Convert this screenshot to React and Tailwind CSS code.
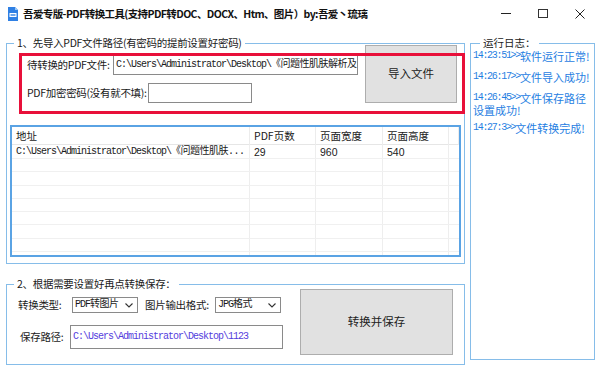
import React from "react";

const cjk = "font-['Noto_Sans_CJK_SC',sans-serif]";
const mono = "font-['Liberation_Mono','Noto_Sans_CJK_SC',monospace]";
const label = "shrink-0 whitespace-nowrap text-[10.5px] tracking-[-0.3px] leading-[14px]";

function AppIcon() {
    return (
        <svg width="16" height="16" viewBox="0 0 16 16">
            <path d="M3 1h7l3 3v11H3z" fill="#2f80e4" />
            <path d="M10 1v3h3z" fill="#9cc8f5" />
            <rect x="4.5" y="7" width="7" height="4" fill="#fff" />
            <rect x="5.5" y="8.3" width="5" height="1.4" fill="#2f80e4" />
        </svg>
    );
}

function Chevron() {
    return (
        <svg width="8" height="5" viewBox="0 0 8 5" className="ml-auto mr-[4px] shrink-0">
            <path d="M0.5 0.5L4 4L7.5 0.5" fill="none" stroke="#333" strokeWidth="1.1" />
        </svg>
    );
}

function Path({ text, tail }) {
    return (
        <span className={`${mono} text-[10px] leading-[12px] tracking-[-1px] whitespace-nowrap`}>
            {text}
            {tail && <span className="tracking-[-0.5px]">{tail}</span>}
        </span>
    );
}

function LogLine({ text, mb }) {
    const [time, msg] = text;
    return (
        <div className={`h-[12px] flex items-center whitespace-nowrap text-[#1f80e2] ${mb}`}>
            {time && <span className={`${mono} text-[10px] leading-[12px] tracking-[-1.3px]`}>{time}&gt;&gt;</span>}
            <span className={`${cjk} text-[11px] leading-[12px]`}>{msg}</span>
        </div>
    );
}

const rows = [
    ["C:\\Users\\Administrator\\Desktop\\", "《问题性肌肤...", "29", "960", "540"],
    ...Array.from({ length: 8 }, () => ["", "", "", "", ""]),
];

export default function App() {
    return (
        <div className={`relative w-[600px] h-[365px] overflow-hidden bg-white text-[#1a1a1a] ${cjk}`}>
            {/* title bar */}
            <div className="h-[27px] flex items-center">
                <div className="ml-[5px] mr-[2px]">
                    <AppIcon />
                </div>
                <span className="text-[10.5px] font-bold tracking-[-0.6px] text-[#111] whitespace-nowrap">
                    吾爱专版-PDF转换工具(支持PDF转DOC、DOCX、Htm、图片）by:吾爱丶琉璃
                </span>
                <div className="ml-auto flex items-center h-full">
                    <div className="w-[37px] flex justify-center">
                        <div className="w-[10px] h-px bg-[#222]" />
                    </div>
                    <div className="w-[37px] flex justify-center">
                        <div className="w-[10px] h-[9px] border border-[#333]" />
                    </div>
                    <div className="w-[38px] mr-[1px] flex justify-center">
                        <svg width="10" height="10" viewBox="0 0 10 10">
                            <path d="M0.5 0.5L9.5 9.5M9.5 0.5L0.5 9.5" stroke="#222" strokeWidth="1" />
                        </svg>
                    </div>
                </div>
            </div>

            <div className="flex pl-[6px] pt-[9px] gap-[5px] h-[338px]">
                <div className="w-[459px] flex flex-col">
                    {/* group 1 */}
                    <fieldset className="border border-[#86bde9] pb-[6px]">
                        <legend className="ml-[7px] px-[3px] text-[10.5px] tracking-[-0.3px] leading-[14px]">
                            1、先导入PDF文件路径(有密码的提前设置好密码)
                        </legend>
                        <div className="flex">
                            <div className="pl-[20px] pt-[5px] flex flex-col gap-[8px]">
                                <div className="flex items-center h-[20px]">
                                    <span className={`${label} w-[86px]`}>待转换的PDF文件:</span>
                                    <div className="w-[245px] h-[20px] border border-[#8a8a8a] bg-white flex items-center pl-[2px] overflow-hidden">
                                        <Path text="C:\Users\Administrator\Desktop\" tail="《问题性肌肤解析及" />
                                    </div>
                                </div>
                                <div className="flex items-center h-[20px]">
                                    <span className={`${label} w-[121px]`}>PDF加密密码(没有就不填):</span>
                                    <div className="w-[104px] h-[20px] border border-[#8a8a8a] bg-white" />
                                </div>
                            </div>
                            <button className="ml-auto mr-[7px] -mt-[5px] w-[92px] h-[58px] bg-[#e1e1e1] border border-[#adadad] text-[11.5px] text-[#222]">
                                导入文件
                            </button>
                        </div>

                        {/* table */}
                        <div className="mx-[3px] mt-[22px] h-[132px] border-2 border-[#5aa3e4] overflow-hidden bg-white">
                            <div className="grid grid-cols-[238px_66px_67px_66px_1fr] h-[18px] border-b border-[#e6e6e6] text-[10.5px] leading-[18px]">
                                {["地址", "PDF页数", "页面宽度", "页面高度", ""].map((h, i) => (
                                    <div key={i} className="pl-[4px] border-r border-[#ececec] whitespace-nowrap">
                                        {h}
                                    </div>
                                ))}
                            </div>
                            {rows.map((r, i) => (
                                <div
                                    key={i}
                                    className={`grid grid-cols-[238px_66px_67px_66px_1fr] border-b border-[#f0f0f0] ${i === 0 ? "h-[14px]" : "h-[13.3px]"}`}
                                >
                                    <div className="pl-[4px] border-r border-[#eeeeee] flex items-center">
                                        {r[0] && <Path text={r[0]} tail={r[1]} />}
                                    </div>
                                    {[r[2], r[3], r[4]].map((v, j) => (
                                        <div key={j} className="pl-[4px] border-r border-[#eeeeee] flex items-center font-['Liberation_Sans',sans-serif] text-[10.5px] leading-[12px]">
                                            {v}
                                        </div>
                                    ))}
                                    <div />
                                </div>
                            ))}
                        </div>
                    </fieldset>

                    {/* group 2 */}
                    <fieldset className="mt-[13px] border border-[#86bde9] pb-[9px]">
                        <legend className="ml-[7px] px-[3px] text-[10.5px] tracking-[-0.3px] leading-[14px]">
                            2、根据需要设置好再点转换保存：
                        </legend>
                        <div className="flex">
                            <div className="pl-[11px] pt-[6px] flex flex-col">
                                <div className="flex items-center h-[16px]">
                                    <span className={`${label} w-[54px]`}>转换类型:</span>
                                    <div className="w-[66px] h-[16px] border border-[#8a8a8a] bg-white flex items-center pl-[2px]">
                                        <Path text="PDF" tail="转图片" />
                                        <Chevron />
                                    </div>
                                    <span className={`${label} ml-[7px] w-[70px]`}>图片输出格式:</span>
                                    <div className="w-[66px] h-[16px] border border-[#8a8a8a] bg-white flex items-center pl-[2px]">
                                        <Path text="JPG" tail="格式" />
                                        <Chevron />
                                    </div>
                                </div>
                                <div className="flex items-center mt-[12px] pl-[2px]">
                                    <span className={`${label} w-[50px]`}>保存路径:</span>
                                    <div className="w-[213px] h-[24px] border border-[#8a8a8a] bg-white flex items-center pl-[2px] text-[#5540dd]">
                                        <Path text="C:\Users\Administrator\Desktop\1123" />
                                    </div>
                                </div>
                            </div>
                            <button className="ml-auto mr-[11px] -mt-[2px] w-[153px] h-[66px] bg-[#e1e1e1] border border-[#adadad] text-[11.5px] text-[#222]">
                                转换并保存
                            </button>
                        </div>
                    </fieldset>
                </div>

                {/* log */}
                <fieldset className="w-[125px] mb-[5px] border border-[#86bde9] pl-[2px]">
                    <legend className="ml-[7px] px-[3px] text-[10.5px] leading-[14px]">运行日志：</legend>
                    <div className="flex flex-col">
                        <LogLine text={["14:23:51", "软件运行正常!"]} mb="mb-[9px]" />
                        <LogLine text={["14:26:17", "文件导入成功!"]} mb="mb-[9px]" />
                        <LogLine text={["14:26:45", "文件保存路径"]} mb="" />
                        <LogLine text={["", "设置成功!"]} mb="mb-[6px]" />
                        <LogLine text={["14:27:3", "文件转换完成!"]} mb="" />
                    </div>
                </fieldset>
            </div>

            {/* red annotation frame */}
            <div className="absolute left-[19px] top-[53px] w-[446px] h-[61px] border-[3px] border-[#e8103a] pointer-events-none" />
        </div>
    );
}
